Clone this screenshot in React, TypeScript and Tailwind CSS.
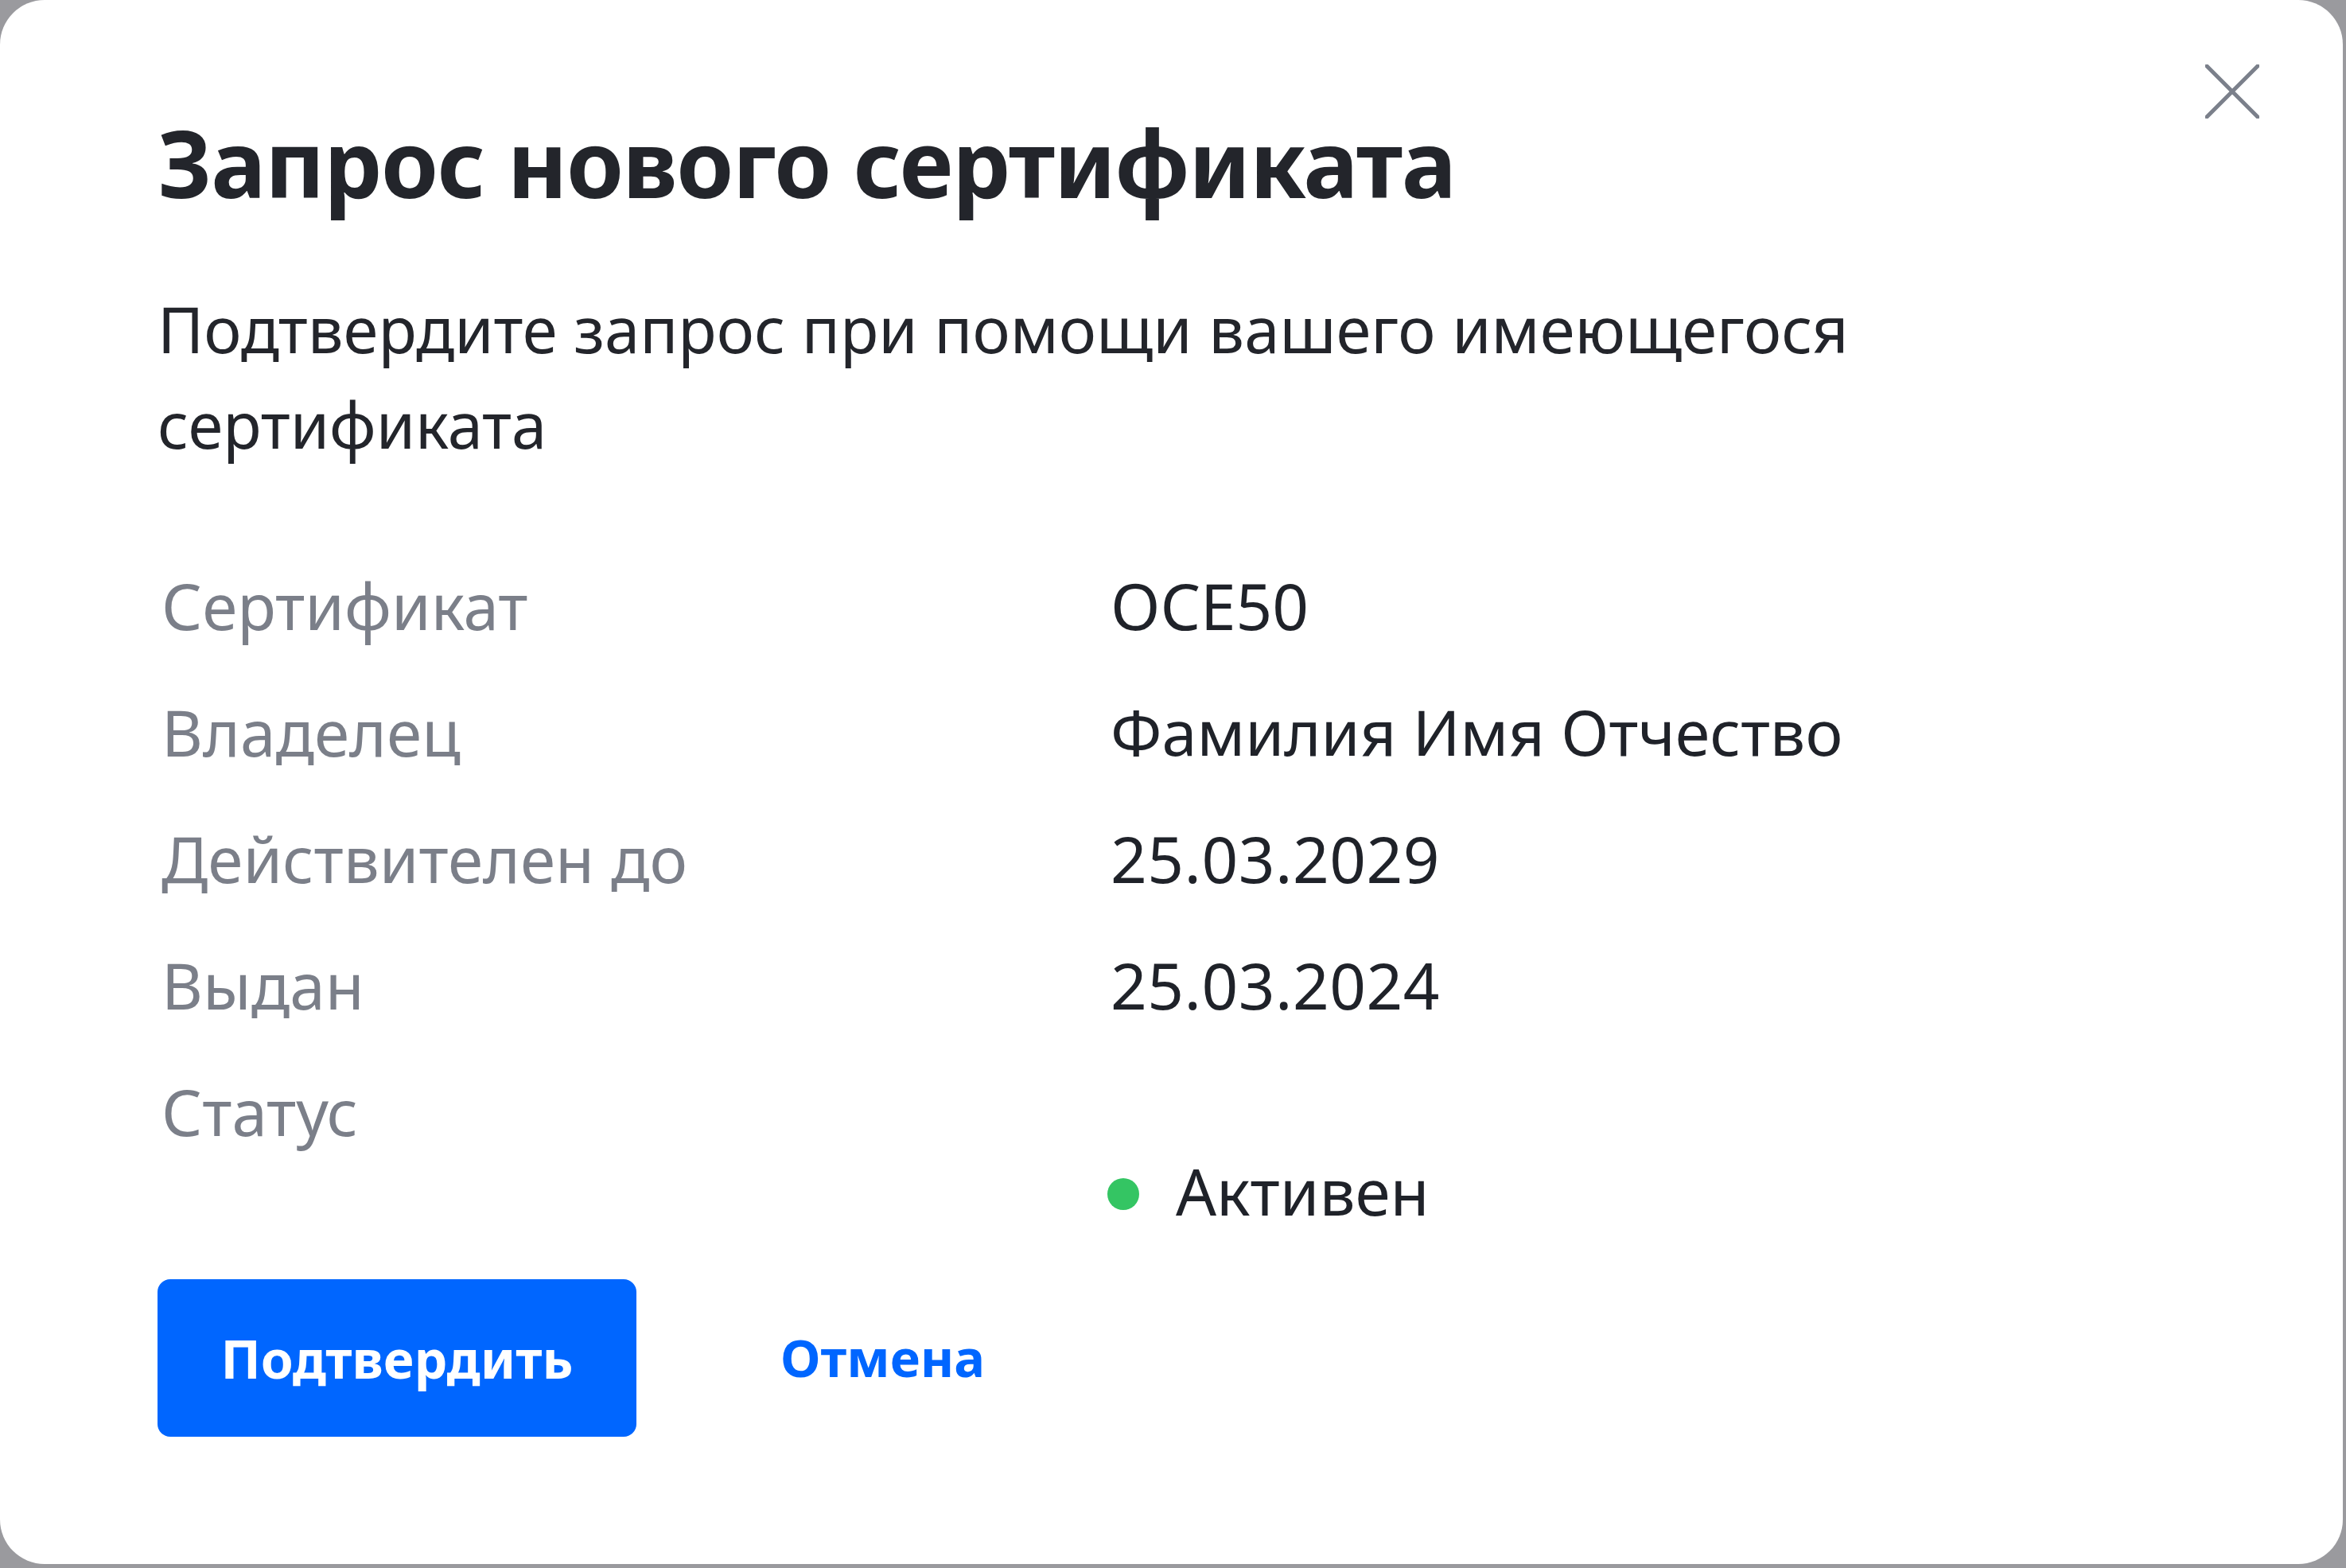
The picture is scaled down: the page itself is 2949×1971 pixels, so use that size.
import React from "react";

const rows: { label: string; value: string; cls: string }[] = [
  { label: "Сертификат", value: "OCE50", cls: "text-[80px] leading-[159px] text-[#1f2229]" },
  { label: "Владелец", value: "Фамилия Имя Отчество", cls: "text-[79px] leading-[159px] text-[#1f2229]" },
  { label: "Действителен до", value: "25.03.2029", cls: "text-[80px] leading-[159px] text-[#1f2229] tracking-[0.5px]" },
  { label: "Выдан", value: "25.03.2024", cls: "text-[80px] leading-[159px] text-[#1f2229] tracking-[0.5px]" },
];

export default function App() {
  return (
    <div
      className="w-[2949px] h-[1971px] bg-[#9a9a9e] overflow-hidden"
      style={{ fontFamily: '"Noto Sans", "Open Sans", sans-serif' }}
    >
      <div className="relative w-[2945px] h-[1966px] bg-white rounded-[56px] pl-[198px] pt-[126px]">
        <button className="absolute right-[105px] top-[81px] w-[68px] h-[68px]" aria-label="Закрыть">
          <svg viewBox="0 0 68 68" className="w-[68px] h-[68px]">
            <path d="M2 2 L66 66 M66 2 L2 66" stroke="#7b808b" strokeWidth="5" strokeLinecap="round" />
          </svg>
        </button>

        <h1 className="text-[116px] leading-[156px] font-bold text-[#23252b] tracking-[-1.5px]">
          Запрос нового сертификата
        </h1>

        <p className="mt-[71px] w-[2200px] text-[79.5px] leading-[120px] text-[#23252b]">
          Подтвердите запрос при помощи вашего имеющегося сертификата
        </p>

        <div className="mt-[88px] grid grid-cols-[1198px_1fr]">
          {rows.map((r) => (
            <React.Fragment key={r.label}>
              <div className="pl-[5px] text-[80px] leading-[159px] text-[#7b7f89]">{r.label}</div>
              <div className={r.cls}>{r.value}</div>
            </React.Fragment>
          ))}
          <div className="pl-[5px] text-[80px] leading-[159px] text-[#7b7f89]">Статус</div>
          <div className="pt-[140px] flex items-center">
            <span className="w-[40px] h-[40px] rounded-full bg-[#34c563] ml-[-4px] mt-[8px]" />
            <span className="ml-[46px] text-[80px] leading-[80px] text-[#1f2229]">Активен</span>
          </div>
        </div>

        <div className="mt-[71px] flex items-center">
          <button className="w-[602px] h-[198px] rounded-[16px] bg-[#0066ff] text-white text-[66px] font-bold">
            Подтвердить
          </button>
          <button className="ml-[181px] text-[65px] font-bold text-[#0066ff]">Отмена</button>
        </div>
      </div>
    </div>
  );
}
